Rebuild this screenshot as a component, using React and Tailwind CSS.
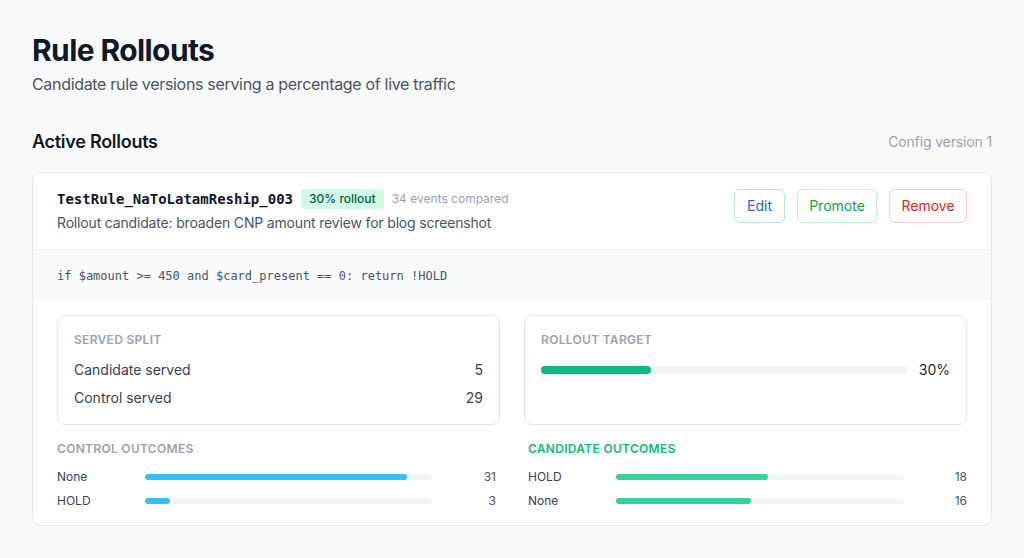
import React from "react";

const sans = { fontFamily: "Inter, 'Noto Sans', sans-serif" };
const mono = { fontFamily: "'DejaVu Sans Mono', 'Liberation Mono', monospace" };

function OutcomeRow({ label, count, total, color }) {
  const pct = (count / total) * 100;
  return (
    <div className="flex items-center text-xs text-[#374151]">
      <div className="w-[88px] shrink-0">{label}</div>
      <div className="h-1.5 flex-1 rounded-full bg-[#f3f4f6]">
        <div className={`h-1.5 rounded-full ${color}`} style={{ width: `${pct}%` }} />
      </div>
      <div className="w-16 shrink-0 text-right text-[#4b5563]">{count}</div>
    </div>
  );
}

export default function App() {
  return (
    <div className="min-h-[558px] bg-[#f9fafb] px-8 pt-8 pb-8 text-[#111827]" style={sans}>
      <h1 className="text-3xl font-bold tracking-[-0.02em] text-[#111827]">Rule Rollouts</h1>
      <p className="mt-1 text-base tracking-[-0.02em] text-[#4b5563]">Candidate rule versions serving a percentage of live traffic</p>

      <div className="mt-8 mb-4 flex items-center justify-between">
        <h2 className="text-lg font-semibold tracking-[-0.015em] text-[#111827]">Active Rollouts</h2>
        <span className="text-sm tracking-[-0.01em] text-[#9ca3af]">Config version 1</span>
      </div>

      <div className="rounded-lg border border-[#e5e7eb] bg-white">
        <div className="flex items-start justify-between px-6 py-4">
          <div>
            <div className="flex items-center gap-2">
              <span className="text-sm font-bold text-[#111827]" style={mono}>
                TestRule_NaToLatamReship_003
              </span>
              <span className="rounded bg-[#d1fae5] px-2 text-xs font-medium leading-5 text-[#065f46]">30% rollout</span>
              <span className="text-xs text-[#9ca3af]">34 events compared</span>
            </div>
            <p className="mt-1 text-sm tracking-[-0.012em] text-[#4b5563]">Rollout candidate: broaden CNP amount review for blog screenshot</p>
          </div>
          <div className="flex gap-3">
            <button className="w-[51px] rounded-md border border-[#bfdbfe] bg-white py-1.5 text-sm text-[#2563eb]">Edit</button>
            <button className="w-[80px] rounded-md border border-[#bbf7d0] bg-white py-1.5 text-sm text-[#16a34a]">Promote</button>
            <button className="w-[78px] rounded-md border border-[#fecaca] bg-white py-1.5 text-sm text-[#dc2626]">Remove</button>
          </div>
        </div>

        <div className="border-y border-[#f3f4f6] bg-[#f9fafb] px-6 pt-[18px] pb-[14px] text-xs leading-4 text-[#4b5563]" style={mono}>
          if $amount &gt;= 450 and $card_present == 0: return !HOLD
        </div>

        <div className="px-6 pt-4 pb-4">
          <div className="grid grid-cols-2 gap-6">
            <div className="rounded-lg border border-[#e5e7eb] p-4">
              <div className="mb-3 text-xs font-semibold uppercase tracking-wide text-[#9ca3af]">Served split</div>
              <div className="flex flex-col gap-2 text-sm text-[#374151]">
                <div className="flex justify-between"><span>Candidate served</span><span>5</span></div>
                <div className="flex justify-between"><span>Control served</span><span>29</span></div>
              </div>
            </div>
            <div className="rounded-lg border border-[#e5e7eb] p-4">
              <div className="mb-3 text-xs font-semibold uppercase tracking-wide text-[#9ca3af]">Rollout target</div>
              <div className="flex items-center gap-3">
                <div className="h-2 flex-1 rounded-full bg-[#f3f4f6]">
                  <div className="h-2 w-[30%] rounded-full bg-[#10b981]" />
                </div>
                <span className="text-sm text-[#1f2937]">30%</span>
              </div>
            </div>
          </div>

          <div className="mt-4 grid grid-cols-2 gap-8">
            <div>
              <div className="mb-3 text-xs font-semibold uppercase tracking-wide text-[#9ca3af]">Control outcomes</div>
              <div className="flex flex-col gap-2">
                <OutcomeRow label="None" count={31} total={34} color="bg-[#38bdf8]" />
                <OutcomeRow label="HOLD" count={3} total={34} color="bg-[#38bdf8]" />
              </div>
            </div>
            <div>
              <div className="mb-3 text-xs font-semibold uppercase tracking-wide text-[#10b981]">Candidate outcomes</div>
              <div className="flex flex-col gap-2">
                <OutcomeRow label="HOLD" count={18} total={34} color="bg-[#34d399]" />
                <OutcomeRow label="None" count={16} total={34} color="bg-[#34d399]" />
              </div>
            </div>
          </div>
        </div>
      </div>
    </div>
  );
}
